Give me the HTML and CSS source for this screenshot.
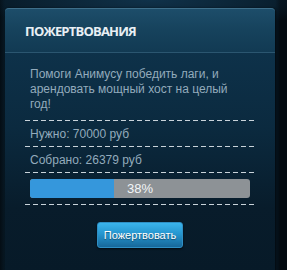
FILE: index.html
```html
<!DOCTYPE html>
<html lang="ru">
<head>
<meta charset="utf-8">
<link rel="stylesheet" href="styles.css">
</head>
<body>
<div class="page">
  <div class="panel">
    <div class="panel-head">ПОЖЕРТВОВАНИЯ</div>
    <div class="panel-body">
      <p class="intro">Помоги Анимусу победить лаги, и арендовать мощный хост на целый год!</p>
      <div class="dash"></div>
      <div class="row">Нужно: 70000 руб</div>
      <div class="dash"></div>
      <div class="row">Собрано: 26379 руб</div>
      <div class="dash"></div>
      <div class="progress-row">
        <div class="progress">
          <div class="progress-fill" style="width:38%"></div>
          <span class="progress-label">38%</span>
        </div>
      </div>
      <div class="dash"></div>
      <div class="actions">
        <button class="btn">Пожертвовать</button>
      </div>
    </div>
  </div>
</div>
</body>
</html>
```

FILE: styles.css
```css
html, body {
  margin: 0;
  padding: 0;
}
body {
  background: #06121b;
  font-family: "Liberation Sans", Arial, sans-serif;
  width: 287px;
  height: 270px;
  overflow: hidden;
}
.page {
  height: 270px;
  padding: 8px 12px 0 5px;
  box-sizing: border-box;
  background: radial-gradient(ellipse 180px 30px at 150px 0, #10324a 0%, rgba(16,50,74,0) 100%), linear-gradient(to right, #040d14 0, #071824 5px, #071824 275px, #030a10 280px);
}
.panel {
  width: 270px;
  height: 270px;
  border-radius: 4px 4px 0 0;
  background: linear-gradient(to bottom, #0f3650 0px, #0b2a3f 120px, #081c2b 200px, #071a28 262px);
  box-shadow: 1px 0 2px rgba(0,0,0,0.6);
}
.panel-head {
  height: 43px;
  padding-left: 20px;
  display: flex;
  align-items: center;
  font-family: "Open Sans", "Noto Sans", sans-serif;
  font-size: 13px;
  font-weight: bold;
  color: #e8eff4;
  letter-spacing: -0.8px;
  border-top: 1px solid #3f6f8a;
  border-radius: 4px 4px 0 0;
  border-bottom: 1px solid #2b5670;
  background: linear-gradient(to bottom, #1d4d6a 0%, #16425c 50%, #123a53 100%);
}
.panel-body {
  padding: 0 20px;
}
.intro {
  margin: 0;
  padding: 14px 5px 8px;
  font-size: 12px;
  line-height: 15px;
  color: #93abbc;
}
.dash {
  height: 1px;
  background: repeating-linear-gradient(to right, #c9d3da 0 5px, transparent 5px 8px);
}
.row {
  height: 25px;
  padding-left: 5px;
  display: flex;
  align-items: center;
  font-size: 12px;
  color: #93abbc;
}
.progress-row {
  padding: 6px 5px;
}
.progress {
  position: relative;
  height: 19px;
  border-radius: 3px;
  background: #8d9296;
  overflow: hidden;
}
.progress-fill {
  height: 100%;
  background: #3597dc;
}
.progress-label {
  position: absolute;
  left: 0;
  right: 0;
  top: 0;
  line-height: 19px;
  text-align: center;
  font-size: 13px;
  color: #f2f5f7;
}
.actions {
  display: flex;
  justify-content: center;
  padding-top: 17px;
}
.btn {
  width: 86px;
  height: 26px;
  padding: 0;
  border: 1px solid #2f8fc4;
  border-radius: 3px;
  background: linear-gradient(to bottom, #3ab4ec 0%, #2696cf 45%, #17689a 100%);
  color: #ffffff;
  font-family: "Liberation Sans", Arial, sans-serif;
  font-size: 11px;
  box-shadow: 0 1px 2px rgba(0,0,0,0.6);
  text-shadow: 0 1px 1px rgba(0,0,0,0.4);
}
```
